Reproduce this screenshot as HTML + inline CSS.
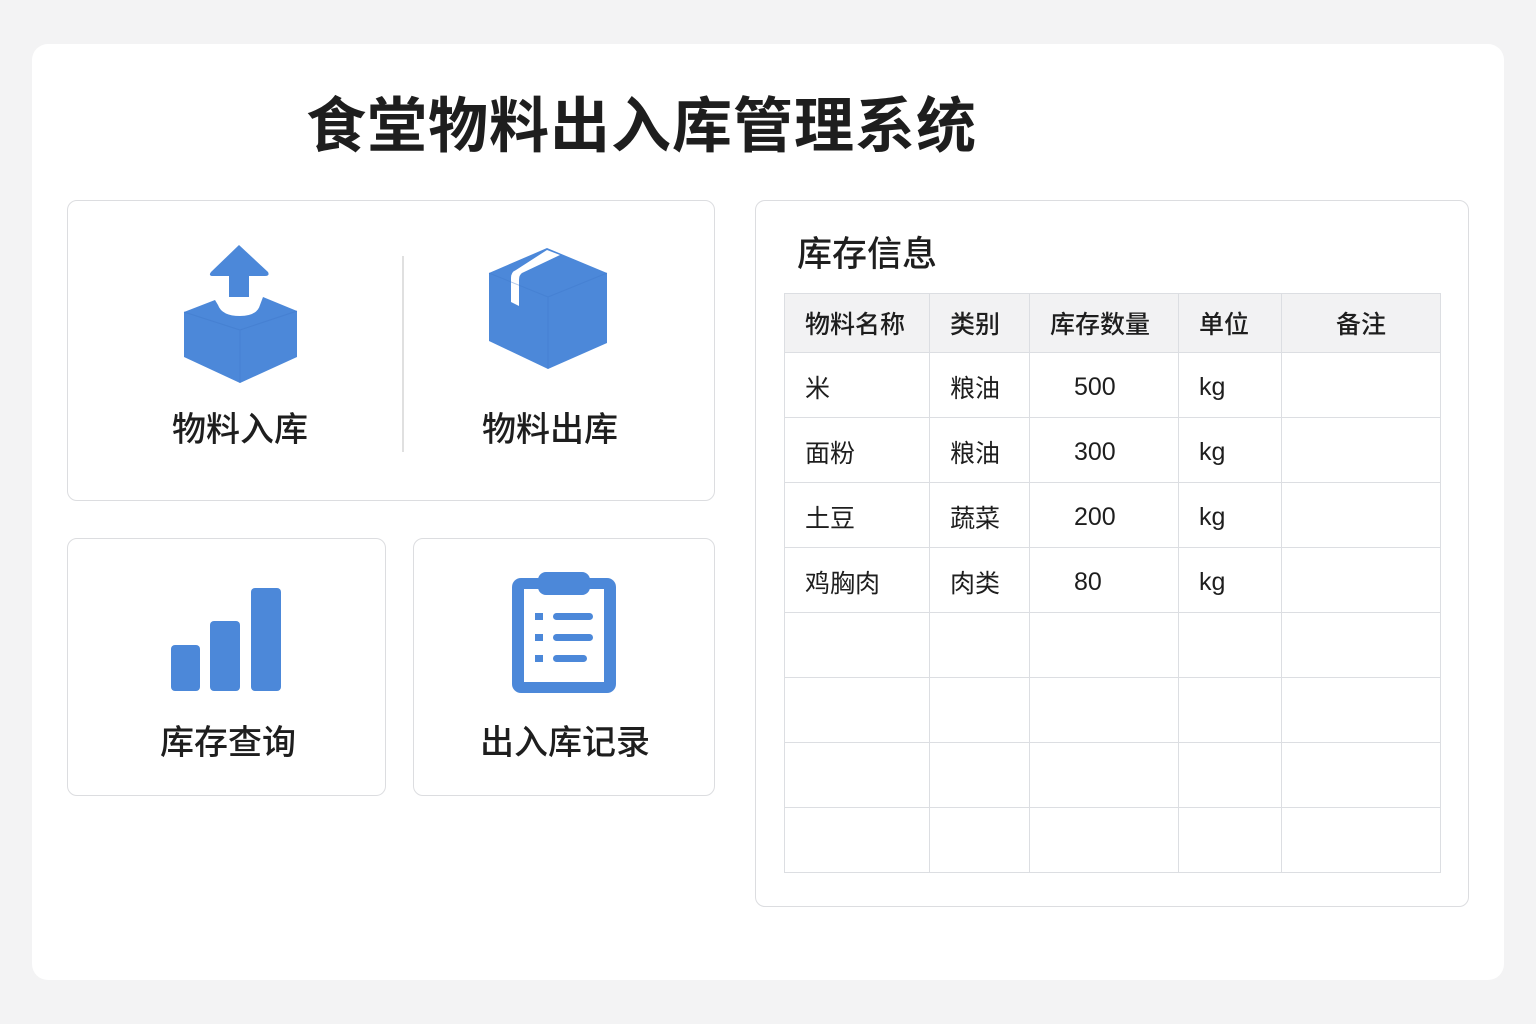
<!DOCTYPE html>
<html><head><meta charset="utf-8"><style>
*{margin:0;padding:0;box-sizing:border-box}
body{width:1536px;height:1024px;background:#f3f3f4;font-family:"Liberation Sans","Noto Sans CJK SC",sans-serif;color:#1e1e1e;position:relative;overflow:hidden}
.abs{position:absolute}
.panel{left:32px;top:44px;width:1472px;height:936px;background:#fff;border-radius:16px}
.card{background:#fff;border:1.5px solid #dcdde0;border-radius:10px}
.t{font-family:"Noto Sans CJK SC",sans-serif;font-weight:700}
.lbl{font-family:"Noto Sans CJK SC",sans-serif;font-weight:500;font-size:34px;text-align:center;line-height:40px}
table{border-collapse:collapse;font-family:"Liberation Sans","Noto Sans CJK SC",sans-serif;font-size:25px}
td,th{border:1px solid #dcdee2;height:65px;padding:4px 0 0 20px;text-align:left;font-weight:400}
th{background:#f2f2f3;font-family:"Noto Sans CJK SC",sans-serif;font-weight:500;height:59px;padding-top:0}
</style></head><body>
<div class="abs panel"></div>
<div class="abs t" style="left:306px;top:84px;font-size:60px;line-height:76px;letter-spacing:1px">食堂物料出入库管理系统</div>

<div class="abs card" style="left:67px;top:200px;width:648px;height:301px"></div>
<div class="abs" style="left:402px;top:256px;width:2px;height:196px;background:#e0e0e0"></div>
<div class="abs card" style="left:67px;top:538px;width:319px;height:258px"></div>
<div class="abs card" style="left:413px;top:538px;width:302px;height:258px"></div>
<svg class="abs" style="left:0;top:0" width="1536" height="1024">
<g fill="#4c88d9">
<path d="M239 245 L268 272 Q270 276 265 276 L249 276 L249 297 L229 297 L229 276 L213 276 Q208 276 211 272 Z"/>
<path d="M184 312 L215 300 L218 305 Q222 316 240 316 Q257 316 260 305 L263 297 L297 311 L297 357 L240 383 L184 357 Z"/>
<path d="M489 273 L547 248 L607 273 L607 343 L548 369 L489 341 Z"/>
<rect x="171" y="645" width="29" height="46" rx="4"/>
<rect x="210" y="621" width="30" height="70" rx="4"/>
<rect x="251" y="588" width="30" height="103" rx="4"/>
<rect x="512" y="578" width="104" height="115" rx="9"/>
</g>
<path d="M547 250 L560 255 L522 273 Q519 275 519 280 L519 306 L511 302 L511 278 Q511 272 516 270 Z" fill="#fff"/>
<path d="M240 330 L297 311 M240 330 L184 312 M240 330 L240 383" stroke="#3f79cb" stroke-width="1" fill="none" opacity=".5"/>
<path d="M548 297 L607 273 M548 297 L548 369 M548 297 L489 273" stroke="#3f79cb" stroke-width="1" fill="none" opacity=".4"/>
<rect x="524" y="589" width="80" height="93" fill="#fff"/>
<rect x="538" y="572" width="52" height="23" rx="8" fill="#4c88d9"/>
<g fill="#4c88d9">
<rect x="535" y="613" width="8" height="7"/><rect x="553" y="613" width="40" height="7" rx="3.5"/>
<rect x="535" y="634" width="8" height="7"/><rect x="553" y="634" width="40" height="7" rx="3.5"/>
<rect x="535" y="655" width="8" height="7"/><rect x="553" y="655" width="34" height="7" rx="3.5"/>
</g>
</svg>
<div class="abs lbl" style="left:140px;top:407px;width:200px">物料入库</div>
<div class="abs lbl" style="left:450px;top:407px;width:200px">物料出库</div>
<div class="abs lbl" style="left:128px;top:720px;width:200px">库存查询</div>
<div class="abs lbl" style="left:465px;top:720px;width:200px">出入库记录</div>

<div class="abs card" style="left:755px;top:200px;width:714px;height:707px"></div>
<div class="abs t" style="left:797px;top:230px;font-size:35px;line-height:44px;font-weight:500">库存信息</div>
<table class="abs" style="left:784px;top:293px;width:657px">
<tr><th style="width:145px">物料名称</th><th style="width:100px">类别</th><th style="width:149px">库存数量</th><th style="width:103px">单位</th><th style="text-align:center;padding:0">备注</th></tr>
<tr><td>米</td><td>粮油</td><td style="padding-left:44px">500</td><td>kg</td><td></td></tr>
<tr><td>面粉</td><td>粮油</td><td style="padding-left:44px">300</td><td>kg</td><td></td></tr>
<tr><td>土豆</td><td>蔬菜</td><td style="padding-left:44px">200</td><td>kg</td><td></td></tr>
<tr><td>鸡胸肉</td><td>肉类</td><td style="padding-left:44px">80</td><td>kg</td><td></td></tr>
<tr><td></td><td></td><td></td><td></td><td></td></tr>
<tr><td></td><td></td><td></td><td></td><td></td></tr>
<tr><td></td><td></td><td></td><td></td><td></td></tr>
<tr><td></td><td></td><td></td><td></td><td></td></tr>
</table>
</body></html>
